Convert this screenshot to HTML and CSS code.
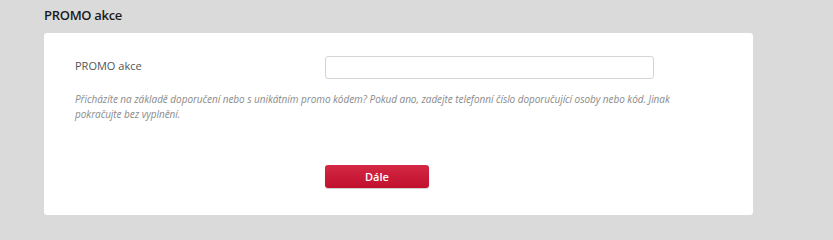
FILE: index.html
```html
<!DOCTYPE html>
<html lang="cs">
<head>
<meta charset="utf-8">
<title>PROMO akce</title>
<link rel="stylesheet" href="styles.css">
</head>
<body>
<div class="page">
  <h2 class="title">PROMO akce</h2>
  <div class="card">
    <div class="row">
      <label class="label" for="promo">PROMO akce</label>
      <input class="input" id="promo" type="text">
    </div>
    <p class="help">Přicházíte na základě doporučení nebo s unikátním promo kódem? Pokud ano, zadejte telefonní číslo doporučující osoby nebo kód. Jinak pokračujte bez vyplnění.</p>
    <div class="actions">
      <button class="btn" type="button">Dále</button>
    </div>
  </div>
</div>
</body>
</html>
```
FILE: styles.css
```css
html, body {
  margin: 0;
  padding: 0;
}
body {
  background: #dadada;
  font-family: "Open Sans", "Liberation Sans", sans-serif;
  color: #333;
  width: 833px;
  height: 226px;
  overflow: hidden;
}
.page {
  padding: 0 80px 0 44px;
}
.title {
  margin: 0;
  padding-top: 6px;
  height: 27px;
  font-size: 13px;
  font-weight: 600;
  letter-spacing: -0.3px;
  line-height: 19px;
  color: #1a1a1a;
}
.card {
  background: #fff;
  border-radius: 3px;
  width: 709px;
  height: 182px;
  box-sizing: border-box;
  padding: 23px 31px 0 31px;
}
.row {
  display: flex;
  align-items: center;
}
.label {
  width: 250px;
  font-size: 11px;
  color: #555;
  line-height: 15px;
  margin-top: -5px;
}
.input {
  width: 329px;
  height: 23px;
  box-sizing: border-box;
  border: 1px solid #d4d4d4;
  border-radius: 3px;
  background: #fff;
  margin: 0;
  padding: 0 6px;
}
.help {
  margin: 13px 0 0;
  font-size: 10px;
  font-style: italic;
  line-height: 15px;
  color: #8a8a8a;
  width: 640px;
  letter-spacing: -0.05px;
}
.actions {
  display: flex;
  padding-left: 250px;
  margin-top: 43px;
}
.btn {
  width: 104px;
  height: 23px;
  border: none;
  border-radius: 3px;
  background: linear-gradient(#d42844, #c0102e);
  box-shadow: 0 1px 1px rgba(0,0,0,0.2);
  color: #fff;
  font-family: "Open Sans", "Liberation Sans", sans-serif;
  font-size: 11px;
  font-weight: 600;
  padding: 0;
  cursor: pointer;
}
```
